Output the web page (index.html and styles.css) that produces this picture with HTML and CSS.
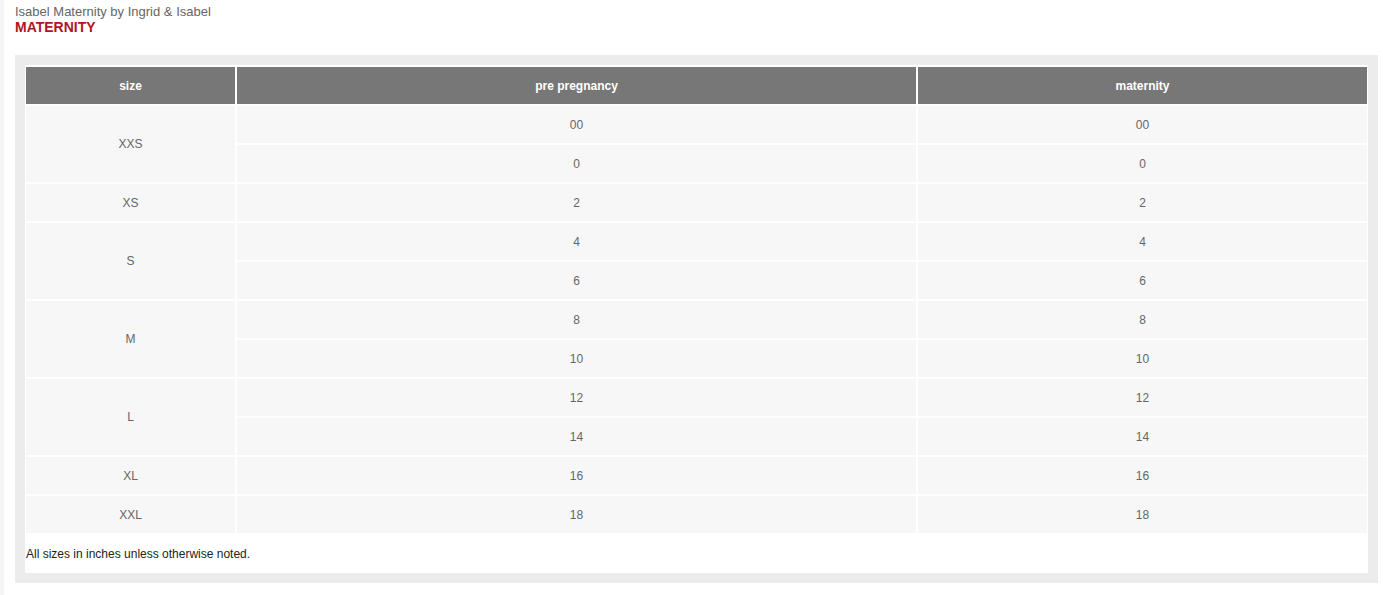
FILE: index.html
```html
<!DOCTYPE html>
<html>
<head>
<meta charset="utf-8">
<link rel="stylesheet" href="styles.css">
</head>
<body>
<div class="page">
  <div class="brand">Isabel Maternity by Ingrid &amp; Isabel</div>
  <div class="category">MATERNITY</div>
  <div class="outer">
    <div class="inner">
      <table class="chart">
        <colgroup><col class="c1"><col class="c2"><col class="c3"></colgroup>
        <thead>
          <tr><th>size</th><th>pre pregnancy</th><th class="last">maternity</th></tr>
        </thead>
        <tbody>
          <tr><td rowspan="2">XXS</td><td>00</td><td class="last">00</td></tr>
          <tr><td>0</td><td class="last">0</td></tr>
          <tr><td>XS</td><td>2</td><td class="last">2</td></tr>
          <tr><td rowspan="2">S</td><td>4</td><td class="last">4</td></tr>
          <tr><td>6</td><td class="last">6</td></tr>
          <tr><td rowspan="2">M</td><td>8</td><td class="last">8</td></tr>
          <tr><td>10</td><td class="last">10</td></tr>
          <tr><td rowspan="2">L</td><td>12</td><td class="last">12</td></tr>
          <tr><td>14</td><td class="last">14</td></tr>
          <tr><td>XL</td><td>16</td><td class="last">16</td></tr>
          <tr><td>XXL</td><td>18</td><td class="last">18</td></tr>
        </tbody>
      </table>
      <div class="note">All sizes in inches unless otherwise noted.</div>
    </div>
  </div>
</div>
</body>
</html>
```

FILE: styles.css
```css
html, body {
  margin: 0;
  padding: 0;
  background: #fff;
}
body {
  font-family: "Liberation Sans", Arial, sans-serif;
}
.page {
  border-left: 4px solid #f5f5f5;
  padding: 4px 0 12px 11px;
  min-height: 579px;
  box-sizing: border-box;
}
.brand {
  font-size: 13px;
  line-height: 15px;
  color: #666;
}
.category {
  font-size: 14px;
  line-height: 16px;
  font-weight: bold;
  color: #b0161c;
  margin-bottom: 20px;
}
.outer {
  width: 1363px;
  box-sizing: border-box;
  background: #ececec;
  padding: 10px;
}
.inner {
  background: #fff;
  padding: 2px 1px 12px 1px;
}
.chart {
  width: 1341px;
  border-collapse: separate;
  border-spacing: 0;
  table-layout: fixed;
  font-size: 12px;
}
.c1 { width: 211px; }
.c2 { width: 681px; }
.c3 { width: 449px; }
.chart th, .chart td {
  height: 37px;
  padding: 0;
  text-align: center;
  vertical-align: middle;
  border-right: 2px solid #fff;
  border-bottom: 2px solid #fff;
  box-sizing: content-box;
}
.chart th.last, .chart td.last {
  border-right: 0;
}
.chart th {
  background: #777;
  color: #fff;
  font-weight: bold;
}
.chart td {
  background: #f7f7f7;
  color: #666;
}
.note {
  margin-top: 12px;
  font-size: 12px;
  line-height: 14px;
  color: #222;
}
```
